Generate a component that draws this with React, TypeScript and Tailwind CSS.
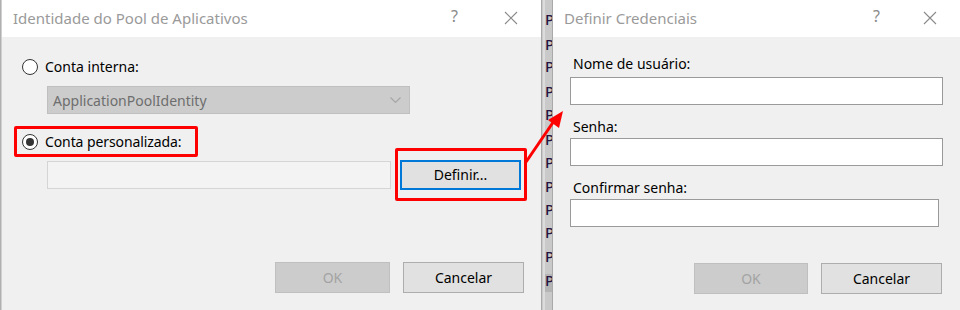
import React from "react";

const font = { fontFamily: '"Noto Sans", "Open Sans", sans-serif' };

function CloseIcon() {
  return (
    <svg width="14" height="14" viewBox="0 0 14 14" className="block">
      <path d="M1 1 L13 13 M13 1 L1 13" stroke="#8a8a8a" strokeWidth="1.1" fill="none" />
    </svg>
  );
}

function TitleBar({ title, helpRight, closeRight }: { title: string; helpRight: string; closeRight: string }) {
  return (
    <div className="relative h-[37px] bg-white flex items-center">
      <span className="text-[15px] leading-none text-[#9a9a9a] pl-[11px]">{title}</span>
      <span className={`absolute top-[8px] text-[16px] leading-none text-[#8a8a8a] ${helpRight}`}>?</span>
      <span className={`absolute top-[11px] ${closeRight}`}>
        <CloseIcon />
      </span>
    </div>
  );
}

function Radio({ checked }: { checked?: boolean }) {
  return (
    <span className="w-[16px] h-[16px] rounded-full border-[1.5px] border-[#333333] bg-white flex items-center justify-center shrink-0">
      {checked && <span className="w-[8px] h-[8px] rounded-full bg-[#333333]" />}
    </span>
  );
}

function Btn({ label, disabled }: { label: string; disabled?: boolean }) {
  return (
    <div
      className={
        disabled
          ? "h-[31px] flex items-center justify-center bg-[#cccccc] border border-[#bfbfbf] text-[#a3a3a3] text-[14px]"
          : "h-[31px] flex items-center justify-center bg-[#e1e1e1] border border-[#adadad] text-black text-[14px]"
      }
    >
      {label}
    </div>
  );
}

const stripYs = [20, 45, 67, 92, 115, 140, 163, 187, 210, 233, 257, 281];

export default function App() {
  return (
    <div className="relative w-[960px] h-[310px] flex overflow-hidden bg-[#f0f0f0]" style={font}>
      {/* left edge */}
      <div className="w-[2px] h-full bg-[#b0b0b0] border-r border-[#d0d0d0] shrink-0" />

      {/* Left dialog */}
      <div className="w-[539px] h-full flex flex-col shrink-0">
        <TitleBar title="Identidade do Pool de Aplicativos" helpRight="right-[83px]" closeRight="right-[23px]" />
        <div className="flex-1 bg-[#f0f0f0] flex flex-col pt-[22px]">
          <div className="flex items-center gap-[7px] ml-[20px] h-[16px]">
            <Radio />
            <span className="text-[14px] text-black leading-none">Conta interna:</span>
          </div>
          <div className="ml-[45px] mt-[11px] w-[363px] h-[28px] bg-[#cccccc] border border-[#bfbfbf] flex items-center justify-between pl-[5px] pr-[8px]">
            <span className="text-[14px] text-[#6e6e6e]">ApplicationPoolIdentity</span>
            <svg width="11" height="7" viewBox="0 0 11 7">
              <path d="M0.5 0.5 L5.5 5.5 L10.5 0.5" stroke="#a6a6a6" strokeWidth="1.2" fill="none" />
            </svg>
          </div>
          <div className="ml-[12px] mt-[12px] w-[184px] h-[31px] border-[3px] border-[#ff0000] rounded-[2px] flex items-center gap-[7px] pl-[5px]">
            <Radio checked />
            <span className="text-[14px] text-black leading-none tracking-[-0.1px]">Conta personalizada:</span>
          </div>
          <div className="flex items-center mt-[-9px]">
            <div className="ml-[45px] w-[344px] h-[28px] bg-[#f3f3f3] border border-[#d5d5d5]" />
            <div className="ml-[4px] w-[132px] h-[53px] border-[3px] border-[#ff0000] rounded-[2px] flex items-center pl-[2px]">
              <div className="w-[121px] h-[30px] bg-[#e1e1e1] border-2 border-[#0078d7] flex items-center justify-center text-[14px] text-black">
                Definir...
              </div>
            </div>
          </div>
          <div className="flex justify-end gap-[13px] pr-[17px] mt-[61px]">
            <div className="w-[115px]">
              <Btn label="OK" disabled />
            </div>
            <div className="w-[121px]">
              <Btn label="Cancelar" />
            </div>
          </div>
        </div>
      </div>

      {/* middle strip */}
      <div className="relative w-[12px] h-full shrink-0 bg-[#c9c9c9] border-l border-[#7c7c7c] border-r border-[#a9a9a9] overflow-hidden">
        <div className="absolute left-[1px] top-0 w-[2px] h-full bg-[#dcdcdc]" />
        <div className="absolute left-[3px] top-[274px] w-[7px] h-[18px] bg-[#b4b4b4]" />
        {stripYs.map((y, i) => (
          <span
            key={i}
            className="absolute left-[3px] text-[15px] font-medium leading-none text-[#261540]"
            style={{ top: y - 8 }}
          >
            P
          </span>
        ))}
      </div>

      {/* Right dialog */}
      <div className="flex-1 h-full flex flex-col">
        <TitleBar title="Definir Credenciais" helpRight="right-[80px]" closeRight="right-[23px]" />
        <div className="flex-1 bg-[#f0f0f0] flex flex-col pt-[17px]">
          <div className="ml-[20px] h-[18px] flex items-center text-[14px] text-black">Nome de usuário:</div>
          <div className="ml-[17px] mt-[5px] w-[373px] h-[28px] bg-white border border-[#9a9a9a]" />
          <div className="ml-[20px] mt-[12px] h-[18px] flex items-center text-[14px] text-black">Senha:</div>
          <div className="ml-[17px] mt-[3px] w-[373px] h-[28px] bg-white border border-[#9a9a9a]" />
          <div className="ml-[20px] mt-[12px] h-[18px] flex items-center text-[14px] text-black">Confirmar senha:</div>
          <div className="ml-[17px] mt-[3px] w-[369px] h-[28px] bg-white border border-[#9a9a9a]" />
          <div className="flex justify-end gap-[13px] pr-[18px] mt-[36px]">
            <div className="w-[114px]">
              <Btn label="OK" disabled />
            </div>
            <div className="w-[121px]">
              <Btn label="Cancelar" />
            </div>
          </div>
        </div>
      </div>

      {/* annotation arrow */}
      <svg className="absolute left-0 top-0 pointer-events-none" width="960" height="310" viewBox="0 0 960 310">
        <line x1="526" y1="162" x2="554" y2="121" stroke="#ff0000" strokeWidth="3" />
        <polygon points="563,111 559,128 548,120" fill="#ff0000" />
      </svg>
    </div>
  );
}
